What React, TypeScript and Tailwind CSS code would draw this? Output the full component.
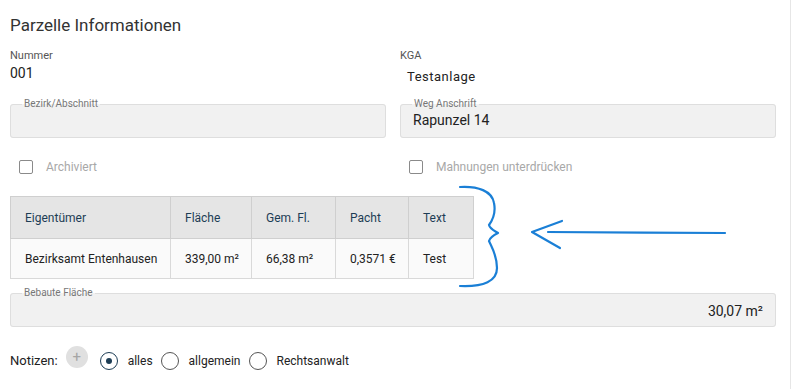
import React from 'react'

const font = { fontFamily: 'Roboto, "Liberation Sans", sans-serif' }

function Field({ label, value, right }: { label: string; value?: string; right?: boolean }) {
  return (
    <fieldset className="min-w-0 h-[40px] rounded-[3px] border border-[#dedede] bg-[#f1f1f1] px-[12px]">
      <legend className="ml-[-1px] px-[2px] text-[10px] leading-[12px] text-[#777]">{label}</legend>
      <div className={`text-[14px] leading-[18px] text-[#222] ${right ? 'text-right pt-[3px] text-[13px]' : 'mt-[1px]'}`}>
        {value}
      </div>
    </fieldset>
  )
}

function Check({ label }: { label: string }) {
  return (
    <div className="flex items-center h-[20px] pl-[9px]">
      <span className="w-[14px] h-[14px] rounded-[2px] border border-[#8a8a8a] bg-white" />
      <span className="ml-[13px] text-[12px] text-[#a8a8a8]">{label}</span>
    </div>
  )
}

function Radio({ checked, label }: { checked?: boolean; label: string }) {
  return (
    <label className="flex items-center">
      <span className={`w-[18px] h-[18px] rounded-full border-[1.5px] flex items-center justify-center ${checked ? 'border-[#1d3d55]' : 'border-[#555]'}`}>
        {checked && <span className="w-[6px] h-[6px] rounded-full bg-[#1d3d55]" />}
      </span>
      <span className="ml-[10px] text-[12px] text-[#222]">{label}</span>
    </label>
  )
}

export default function App() {
  const cols = [
    { h: 'Eigentümer', v: 'Bezirksamt Entenhausen', w: 'w-[160px]' },
    { h: 'Fläche', v: '339,00 m²', w: 'w-[81px]' },
    { h: 'Gem. Fl.', v: '66,38 m²', w: 'w-[84px]' },
    { h: 'Pacht', v: '0,3571 €', w: 'w-[73px]' },
    { h: 'Text', v: 'Test', w: 'w-[65px]' },
  ]

  return (
    <div className="relative w-[794px] h-[389px] bg-white overflow-hidden" style={font}>
      <div className="w-[791px] h-full border-r border-[#e6e6e6] pl-[10px] pr-[14px]">
        <h2 className="pt-[13px] text-[17px] leading-[24px] text-[#333]">Parzelle Informationen</h2>

        {/* Nummer / KGA */}
        <div className="grid grid-cols-2 gap-x-[14px] mt-[12px]">
          <div>
            <div className="text-[11px] leading-[14px] text-[#555]">Nummer</div>
            <div className="mt-[1px] text-[14px] leading-[18px] text-[#222]">001</div>
          </div>
          <div>
            <div className="text-[11px] leading-[14px] text-[#555]">KGA</div>
            <div className="mt-[5px] pl-[7px] text-[13px] leading-[18px] tracking-[0.5px] text-[#222]">Testanlage</div>
          </div>
        </div>

        {/* Felder */}
        <div className="grid grid-cols-2 gap-x-[14px] mt-[12px]">
          <Field label="Bezirk/Abschnitt" />
          <Field label="Weg Anschrift" value="Rapunzel 14" />
        </div>

        <div className="grid grid-cols-2 gap-x-[14px] mt-[19px]">
          <Check label="Archiviert" />
          <Check label="Mahnungen unterdrücken" />
        </div>

        {/* Tabelle */}
        <table className="mt-[19px] border-collapse text-[12px] whitespace-nowrap">
          <thead>
            <tr className="h-[42px] bg-[#e5e5e5]">
              {cols.map(c => (
                <th key={c.h} className={`${c.w} border border-[#cfcfcf] pl-[14px] pr-[4px] text-left font-normal text-[#1d3d55]`}>{c.h}</th>
              ))}
            </tr>
          </thead>
          <tbody>
            <tr className="h-[40px] bg-[#fafafa]">
              {cols.map(c => (
                <td key={c.h} className="border border-[#d9d9d9] pl-[14px] pr-[4px] text-[#222]">{c.v}</td>
              ))}
            </tr>
          </tbody>
        </table>

        <div className="mt-[8px]">
          <Field label="Bebaute Fläche" value="30,07 m²" right />
        </div>

        {/* Notizen */}
        <div className="flex items-center mt-[22px] h-[24px]">
          <span className="text-[13px] text-[#222]">Notizen:</span>
          <span className="ml-[8px] -mt-[8px] w-[22px] h-[22px] rounded-full bg-[#e0e0e0] flex items-center justify-center text-[15px] leading-none text-[#a5a5a5]">+</span>
          <div className="ml-[12px] flex items-center gap-[8px]">
            <Radio checked label="alles" />
            <Radio label="allgemein" />
            <Radio label="Rechtsanwalt" />
          </div>
        </div>
      </div>

      {/* Anmerkung: Klammer + Pfeil */}
      <svg className="absolute left-0 top-0 pointer-events-none" width="794" height="389" viewBox="0 0 794 389" fill="none">
        <path
          d="M460 187 C478 186 492 191 494 203 C496 213 492 221 489 225 C490 229 495 231 498 233 C494 235 490 237 489 241 C492 248 497 255 497 268 C497 281 484 287 460 286"
          stroke="#1a7fd6" strokeWidth="2.2" strokeLinecap="round" strokeLinejoin="round"
        />
        <path d="M548 232 C600 232 670 233 725 233" stroke="#1a7fd6" strokeWidth="2.2" strokeLinecap="round" />
        <path d="M562 221 L532 232 L560 248" stroke="#1a7fd6" strokeWidth="2.2" strokeLinecap="round" strokeLinejoin="round" />
      </svg>
    </div>
  )
}
